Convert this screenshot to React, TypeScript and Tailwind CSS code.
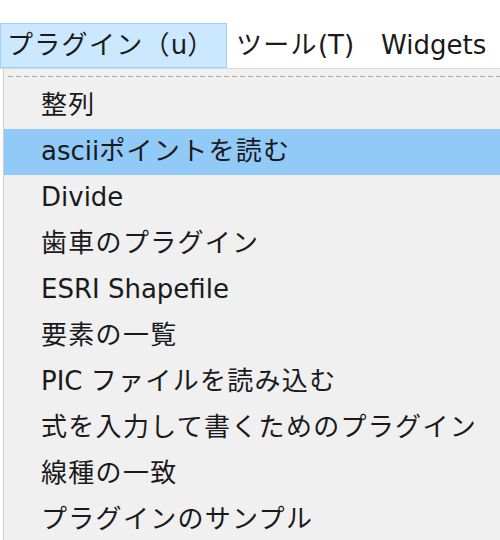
import React from "react";

const items = [
  "整列",
  "asciiポイントを読む",
  "Divide",
  "歯車のプラグイン",
  "ESRI Shapefile",
  "要素の一覧",
  "PIC ファイルを読み込む",
  "式を入力して書くためのプラグイン",
  "線種の一致",
  "プラグインのサンプル",
];

const font = { fontFamily: "'DejaVu Sans', 'Noto Sans CJK JP', sans-serif" };

function Label({ text }: { text: string }) {
  const parts = text.split(/([\u3000-\u30ff\u4e00-\u9fff\uff00-\uffef]+)/);
  return (
    <span>
      {parts.map((p, i) =>
        /[\u3000-\u30ff\u4e00-\u9fff\uff00-\uffef]/.test(p) ? (
          <span key={i} className="tracking-[1.3px]">
            {p}
          </span>
        ) : (
          <span key={i}>{p}</span>
        )
      )}
    </span>
  );
}

export default function App() {
  return (
    <div
      className="h-[540px] w-[500px] overflow-hidden bg-white text-[26px] leading-[30px] text-[#1a1a1a]"
      style={font}
    >
      {/* top gap */}
      <div className="h-[23px]" />

      {/* Menu bar */}
      <div className="flex h-[46px] items-stretch border-b border-[#dadada]">
        <div className="flex w-[227px] items-center border border-[#99d1ff] bg-[#cce8ff] pb-[1px] pl-[6px]">
          <Label text="プラグイン（u）" />
        </div>
        <div className="flex items-center pb-[1px] pl-[9px] pr-[18px]">
          <Label text="ツール(T)" />
        </div>
        <div className="flex items-center pb-[1px] px-[9px]">Widgets</div>
      </div>

      {/* Dropdown */}
      <div className="ml-[3px] h-full border-l border-[#cccccc] bg-[#f0f0f0]">
        <div className="pl-[4px] pt-[7px]">
          <div className="h-px bg-[repeating-linear-gradient(to_right,#a8a8a8_0_5px,transparent_5px_8px)]" />
        </div>
        <div className="pt-[6px]">
          {items.map((t, i) => (
            <div
              key={i}
              className={
                "flex h-[46px] items-center pb-[2px] pl-[37px] whitespace-nowrap " +
                (i === 1 ? "bg-[#91c9f7]" : "")
              }
            >
              <Label text={t} />
            </div>
          ))}
        </div>
      </div>
    </div>
  );
}
